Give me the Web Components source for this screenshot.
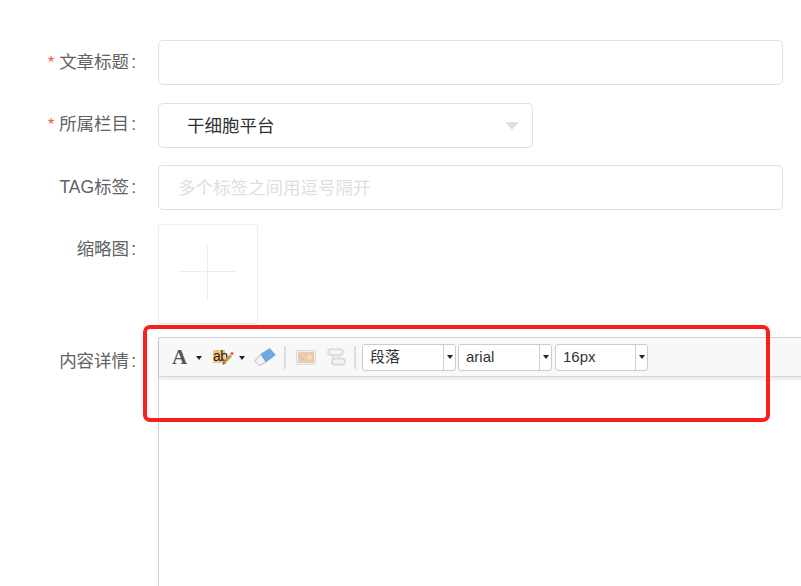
<!DOCTYPE html>
<html lang="zh">
<head>
<meta charset="utf-8">
<title>文章表单</title>
<style>
  html, body { margin: 0; height: 100%; overflow: hidden; background: #fff; }
  body { font-family: "Liberation Sans", "Noto Sans CJK SC", sans-serif; }
</style>
</head>
<body>
<article-form>
  <form-row label="文章标题" required style="--top: 40px">
    <text-field></text-field>
  </form-row>
  <form-row label="所属栏目" required style="--top: 18px; --label-top: 9px">
    <select-field value="干细胞平台"></select-field>
  </form-row>
  <form-row label="TAG标签" style="--top: 17px">
    <text-field placeholder="多个标签之间用逗号隔开"></text-field>
  </form-row>
  <form-row label="缩略图" style="--top: 14px; --label-top: 13px">
    <thumb-upload></thumb-upload>
  </form-row>
  <form-row label="内容详情" style="--top: 13px; --label-top: 12px">
    <rich-editor></rich-editor>
  </form-row>
  <mark-box></mark-box>
</article-form>

<script>
class ArticleForm extends HTMLElement {
  constructor() {
    super();
    this.attachShadow({ mode: "open" });
    this.shadowRoot.innerHTML = `
      <style>
        :host {
          display: flex;
          flex-direction: column;
          position: relative;
          width: 801px;
          height: 586px;
          overflow: hidden;
          font-family: "Liberation Sans", "Noto Sans CJK SC", sans-serif;
        }
      </style>
      <slot></slot>
    `;
  }
}

class FormRow extends HTMLElement {
  constructor() {
    super();
    this.attachShadow({ mode: "open" });
  }

  connectedCallback() {
    const label = this.getAttribute("label") || "";
    const star = this.hasAttribute("required") ? `<span class="star">*</span>` : "";
    this.shadowRoot.innerHTML = `
      <style>
        :host {
          display: flex;
          margin-top: var(--top, 0);
          flex: none;
        }
        .label {
          flex: none;
          width: 136px;
          margin-right: 22px;
          padding-top: var(--label-top, 10px);
          box-sizing: border-box;
          text-align: right;
          font-size: 17.5px;
          line-height: 24px;
          color: #606266;
          white-space: nowrap;
        }
        .star {
          color: #f5533d;
          font-size: 16px;
          margin-right: 5px;
        }
        .colon { margin-left: 2px; }
        .body { flex: none; }
      </style>
      <div class="label">${star}${label}<span class="colon">:</span></div>
      <div class="body"><slot></slot></div>
    `;
  }
}

class TextField extends HTMLElement {
  constructor() {
    super();
    this.attachShadow({ mode: "open" });
  }

  connectedCallback() {
    const placeholder = this.getAttribute("placeholder") || "";
    this.shadowRoot.innerHTML = `
      <style>
        :host {
          display: flex;
          align-items: center;
          box-sizing: border-box;
          width: 625px;
          height: 45px;
          padding: 0 19px 2px;
          border: 1px solid #dddfea;
          border-radius: 5px;
          background: #fff;
          font-size: 17.5px;
          color: #dcdee3;
        }
      </style>
      <span>${placeholder}</span>
    `;
  }
}

class SelectField extends HTMLElement {
  constructor() {
    super();
    this.attachShadow({ mode: "open" });
  }

  connectedCallback() {
    const value = this.getAttribute("value") || "";
    this.shadowRoot.innerHTML = `
      <style>
        :host {
          display: flex;
          align-items: center;
          justify-content: space-between;
          box-sizing: border-box;
          width: 375px;
          height: 45px;
          padding: 0 13px 2px 28px;
          border: 1px solid #dddfea;
          border-radius: 5px;
          background: #fff;
          font-size: 17.5px;
          color: #303133;
        }
        .arrow {
          width: 0;
          height: 0;
          margin-top: 3px;
          border-left: 7px solid transparent;
          border-right: 7px solid transparent;
          border-top: 8px solid #dfe1e8;
        }
      </style>
      <span>${value}</span>
      <i class="arrow"></i>
    `;
  }
}

class ThumbUpload extends HTMLElement {
  constructor() {
    super();
    this.attachShadow({ mode: "open" });
    this.shadowRoot.innerHTML = `
      <style>
        :host {
          display: flex;
          align-items: center;
          justify-content: center;
          box-sizing: border-box;
          width: 100px;
          height: 100px;
          border: 1px solid #eeeeee;
        }
        svg { display: block; margin: 0 1px 2px 0; }
      </style>
      <svg width="57" height="56" viewBox="0 0 57 56">
        <path d="M0 26.5H57M28.5 0V56" stroke="#ececec" fill="none"/>
      </svg>
    `;
  }
}

class TbSelect extends HTMLElement {
  constructor() {
    super();
    this.attachShadow({ mode: "open" });
  }

  connectedCallback() {
    const width = this.getAttribute("width") || "94";
    this.shadowRoot.innerHTML = `
      <style>
        :host {
          display: flex;
          flex: none;
          box-sizing: border-box;
          width: ${width}px;
          height: 27px;
          border: 1px solid #cccccc;
          border-radius: 3px;
          background: #fff;
          font-size: 15px;
          color: #333;
        }
        .val {
          flex: 1;
          padding-left: 7px;
          line-height: 24px;
          white-space: nowrap;
        }
        .btn {
          flex: none;
          width: 11px;
          border-left: 1px solid #cccccc;
          display: flex;
          align-items: center;
          justify-content: center;
        }
        .btn i {
          width: 0;
          height: 0;
          border-left: 3px solid transparent;
          border-right: 3px solid transparent;
          border-top: 4px solid #222;
        }
      </style>
      <div class="val"><slot></slot></div>
      <div class="btn"><i></i></div>
    `;
  }
}

class RichEditor extends HTMLElement {
  constructor() {
    super();
    this.attachShadow({ mode: "open" });
    this.shadowRoot.innerHTML = `
      <style>
        :host {
          display: block;
          box-sizing: border-box;
          width: 660px;
          height: 260px;
          border-left: 1px solid #d0d0d0;
          border-top: 1px solid #d4d4d4;
          background: #fff;
        }
        .bar {
          display: flex;
          align-items: center;
          box-sizing: border-box;
          height: 39px;
          padding-left: 12px;
          background: #f8f8f8;
          border-bottom: 1px solid #d8d8d8;
          box-shadow: 0 2px 4px rgba(0,0,0,0.1);
        }
        .a {
          flex: none;
          width: 17px;
          font: bold 21px/24px "Liberation Serif", serif;
          color: #555;
          text-align: center;
        }
        .caret {
          flex: none;
          width: 0;
          height: 0;
          margin-top: 2px;
          border-left: 3px solid transparent;
          border-right: 3px solid transparent;
          border-top: 4px solid #222;
        }
        .ab {
          position: relative;
          flex: none;
          width: 21px;
          height: 15px;
          margin-left: 11px;
          margin-right: 5px;
        }
        .ab b {
          position: absolute;
          left: 0;
          top: 0;
          width: 12px;
          height: 13px;
          background: #f9c27c;
          font: 14px/13px "Liberation Sans", sans-serif;
          color: #222;
          letter-spacing: -0.5px;
        }
        .ab svg { position: absolute; left: 6px; top: 0; }
        svg { display: block; flex: none; }
        .sep {
          flex: none;
          width: 2px;
          height: 23px;
          background: #dddddd;
        }
      </style>
      <div class="bar">
        <span class="a">A</span>
        <i class="caret" style="margin-left:8px"></i>
        <span class="ab">
          <b>ab</b>
          <svg width="15" height="15" viewBox="0 0 15 15">
            <path d="M5 13L12 5.5" stroke="#c49a50" stroke-width="2.6" fill="none"/>
            <path d="M3.5 14.8L4.2 11.8L6.3 13.8Z" fill="#555"/>
            <circle cx="13" cy="3.5" r="1.6" fill="#e8604c"/>
          </svg>
        </span>
        <i class="caret"></i>
        <svg style="margin-left:9px" width="22" height="18" viewBox="0 0 22 18">
          <path d="M.5 13L7 6L12 14L5.7 17.8Z" fill="#f1f1f1" stroke="#a9a9a9" stroke-width=".8" stroke-linejoin="round"/>
          <path d="M7 6L15.7 .4L21.4 7L12 14Z" fill="#6aa9e6" stroke="#6a96c4" stroke-width=".6" stroke-linejoin="round"/>
        </svg>
        <i class="sep" style="margin-left:8px"></i>
        <svg style="margin-left:10px" width="20" height="15" viewBox="0 0 20 15">
          <rect x=".5" y=".5" width="19" height="14" fill="#eeeeee" stroke="#dedede"/>
          <rect x="2" y="2" width="16" height="11" fill="#eccab2"/>
          <circle cx="13.5" cy="7.5" r="2.4" fill="#f8dfa0"/>
          <path d="M3.5 7L8 9.5" stroke="#c4b6a8" fill="none"/>
        </svg>
        <svg style="margin-left:11px" width="19" height="18" viewBox="0 0 19 18">
          <rect x="1.2" y="1.2" width="14.6" height="5.8" rx="2.9" fill="#f4f4f4" stroke="#dcdcdc" stroke-width="2"/>
          <rect x="5" y="10.5" width="13" height="6.3" rx="3.1" fill="#f4f4f4" stroke="#dcdcdc" stroke-width="2"/>
          <path d="M6 7V11M11.5 7V11" stroke="#dcdcdc" stroke-width="2" fill="none"/>
        </svg>
        <i class="sep" style="margin-left:8px;margin-right:6px"></i>
        <tb-select width="94" style="margin-right:2px">段落</tb-select>
        <tb-select width="94" style="margin-right:3px">arial</tb-select>
        <tb-select width="93">16px</tb-select>
      </div>
    `;
  }
}

class MarkBox extends HTMLElement {
  constructor() {
    super();
    this.attachShadow({ mode: "open" });
    this.shadowRoot.innerHTML = `
      <style>
        :host {
          position: absolute;
          left: 143px;
          top: 325px;
          width: 627px;
          height: 97px;
          box-sizing: border-box;
          border: 4px solid #f9201a;
          border-radius: 7px;
          pointer-events: none;
        }
      </style>
    `;
  }
}

customElements.define("article-form", ArticleForm);
customElements.define("form-row", FormRow);
customElements.define("text-field", TextField);
customElements.define("select-field", SelectField);
customElements.define("thumb-upload", ThumbUpload);
customElements.define("tb-select", TbSelect);
customElements.define("rich-editor", RichEditor);
customElements.define("mark-box", MarkBox);
</script>
</body>
</html>
